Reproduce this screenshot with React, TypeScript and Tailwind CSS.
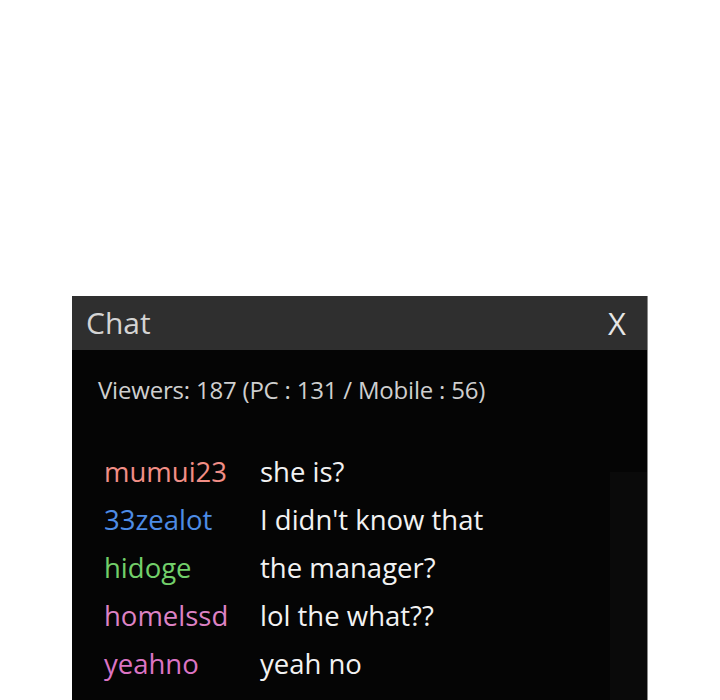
import React from "react";

const messages = [
  { name: "mumui23", color: "text-[#f28e86]", text: "she is?" },
  { name: "33zealot", color: "text-[#4d8ce6]", text: "I didn't know that" },
  { name: "hidoge", color: "text-[#72cf6a]", text: "the manager?" },
  { name: "homelssd", color: "text-[#dd82c4]", text: "lol the what??" },
  { name: "yeahno", color: "text-[#dc74c4]", text: "yeah no" },
];

const App = () => {
  return (
    <div className="w-[720px] h-[700px] overflow-hidden bg-white pt-[296px] pl-[72px] font-['Open_Sans','Liberation_Sans',sans-serif]">
      <div className="w-[576px] h-[420px] bg-[#050505] border-r border-[#8a8a8a] flex flex-col">
        <div className="h-[54px] bg-[#2f2f2f] flex items-center justify-between pl-[14px] pr-[21px]">
          <p className="text-[30px] text-[#d4d4d4] leading-none">Chat</p>
          <p className="text-[31px] text-[#e6e6e6] leading-none">X</p>
        </div>
        <div className="flex flex-1">
          <div className="flex-1 flex flex-col pl-[26px] pt-[24px]">
            <p className="text-[24px] text-[#cfcfcf] leading-[32px] tracking-[-0.2px]">
              Viewers: 187 (PC : 131 / Mobile : 56)
            </p>
            <div className="flex flex-col mt-[42px] pl-[6px]">
              {messages.map((m) => (
                <div key={m.name} className="flex items-center h-[48px] text-[27.5px]">
                  <span className={`w-[156px] ${m.color}`}>{m.name}</span>
                  <span className="text-[#f2f2f2]">{m.text}</span>
                </div>
              ))}
            </div>
          </div>
          <div className="w-[37px] mt-[122px] bg-[#0a0a0a]" />
        </div>
      </div>
    </div>
  );
};

export default App;
